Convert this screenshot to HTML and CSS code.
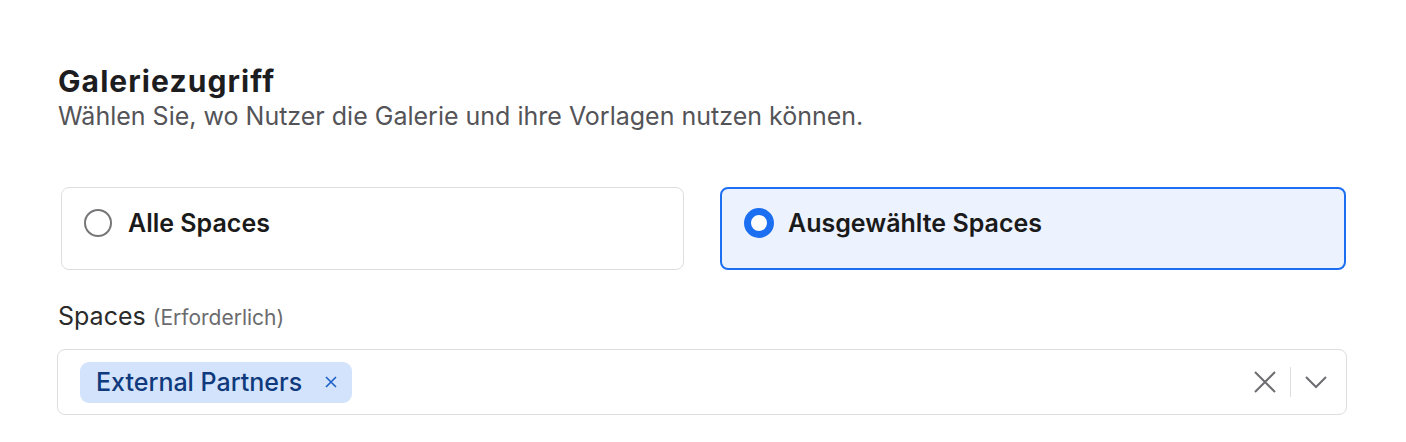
FILE: index.html
```html
<!DOCTYPE html>
<html lang="de">
<head>
  <meta charset="UTF-8" />
  <meta name="viewport" content="width=device-width, initial-scale=1.0" />
  <title>Galeriezugriff</title>
  <link rel="stylesheet" href="styles.css">
</head>
<body>
  <section class="panel">
    <h2 class="title">Galeriezugriff</h2>
    <p class="subtitle">Wählen Sie, wo Nutzer die Galerie und ihre Vorlagen nutzen können.</p>

    <div class="choices">
      <label class="choice">
        <input type="radio" name="access" value="all" />
        <span class="dot"></span>
        <span class="choice-text">Alle Spaces</span>
      </label>
      <label class="choice selected">
        <input type="radio" name="access" value="selected" checked />
        <span class="dot"></span>
        <span class="choice-text">Ausgewählte Spaces</span>
      </label>
    </div>

    <div class="field-label">Spaces <span class="hint">(Erforderlich)</span></div>
    <div class="select">
      <div class="chips">
        <span class="chip">External Partners
          <svg class="chip-x" viewBox="0 0 14 14" width="14" height="14"><path d="M2 2l10 10M12 2L2 12" /></svg>
        </span>
      </div>
      <div class="controls">
        <svg class="clear" viewBox="0 0 24 24" width="24" height="24"><path d="M2 2l20 20M22 2L2 22" /></svg>
        <span class="sep"></span>
        <svg class="chevron" viewBox="0 0 24 14" width="24" height="14"><path d="M2 2l10 10L22 2" /></svg>
      </div>
    </div>
  </section>
</body>
</html>
```

FILE: styles.css
```css
body {
  margin: 0;
  background: #fff;
  font-family: Inter, "Noto Sans", sans-serif;
  color: #1d1d1f;
}
.panel {
  width: 1290px;
  padding: 64px 0 0 57px;
}
.title {
  margin: 0 0 0 1px;
  font-size: 30px;
  font-weight: 650;
  letter-spacing: 1.1px;
  line-height: 34px;
}
.subtitle {
  margin: 3px 0 0 1px;
  font-size: 25px;
  line-height: 30px;
  color: #545458;
}
.choices {
  display: grid;
  grid-template-columns: 623px 626px;
  gap: 36px;
  margin: 56px 0 0 4px;
}
.choice {
  box-sizing: border-box;
  display: flex;
  align-items: center;
  gap: 16px;
  height: 83px;
  padding: 0 22px 12px;
  border: 1px solid #dedede;
  border-radius: 8px;
  cursor: pointer;
}
.choice input {
  display: none;
}
.choice.selected {
  border: 2px solid #1d6ff2;
  background: #edf3fe;
}
.dot {
  box-sizing: border-box;
  width: 28px;
  height: 28px;
  border: 2px solid #767679;
  border-radius: 50%;
}
.selected .dot {
  width: 30px;
  height: 30px;
  margin-right: -2px;
  border: 7px solid #1d6ff2;
  background: #fff;
}
.choice-text {
  font-size: 25px;
  font-weight: 600;
  color: #1a1a1a;
}
.field-label {
  margin: 31px 0 0 1px;
  font-size: 25px;
  line-height: 30px;
  color: #2a2a2a;
}
.hint {
  font-size: 21px;
  color: #6b6b6e;
}
.select {
  box-sizing: border-box;
  display: flex;
  align-items: center;
  justify-content: space-between;
  height: 66px;
  margin-top: 16px;
  padding: 0 18px 0 22px;
  border: 1px solid #dedede;
  border-radius: 8px;
}
.chip {
  display: inline-flex;
  align-items: center;
  gap: 22px;
  height: 41px;
  padding: 0 14px 0 16px;
  border-radius: 9px;
  background: #d3e3fc;
  color: #0f3a7d;
  font-size: 25px;
  font-weight: 500;
}
.chip-x {
  stroke: #1d5fc9;
  stroke-width: 1.6;
  fill: none;
}
.controls {
  display: flex;
  align-items: center;
  gap: 13px;
}
.clear, .chevron {
  stroke: #6d6d72;
  stroke-width: 2;
  fill: none;
}
.sep {
  width: 1px;
  height: 30px;
  background: #dedede;
}
```
